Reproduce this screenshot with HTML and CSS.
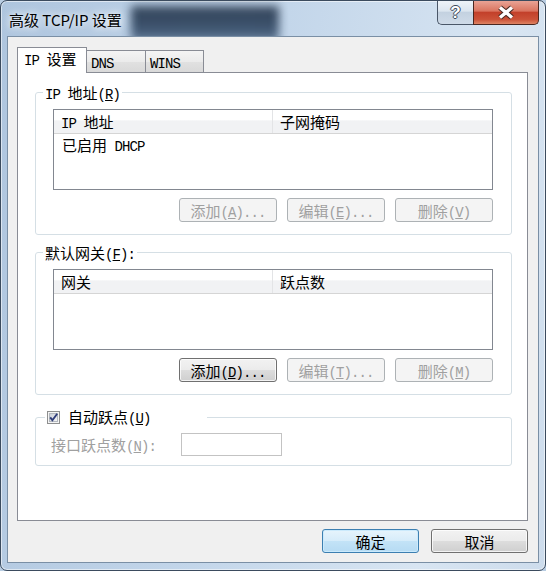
FILE: index.html
```html
<!DOCTYPE html>
<html lang="zh-CN">

<head>
    <meta charset="UTF-8">
    <title>高级 TCP/IP 设置</title>
    <link rel="stylesheet" href="styles.css">
</head>

<body>
    <div class="window">
        <div class="titlebar">
            <span class="title">高级 TCP/IP 设置</span>
            <div class="caption">
                <div class="cap-btn help">?</div>
                <div class="cap-btn close">
                    <svg width="20" height="15" viewBox="0 0 20 15">
                        <path d="M4 2.5 L16 12.5 M16 2.5 L4 12.5" stroke="#4b2a24" stroke-width="5.5" fill="none" />
                        <path d="M4 2.5 L16 12.5 M16 2.5 L4 12.5" stroke="#ffffff" stroke-width="3.4" fill="none" />
                    </svg>
                </div>
            </div>
        </div>

        <div class="client">
            <div class="tabs">
                <div class="tab active"><span class="en">IP </span>设置</div>
                <div class="tab dns"><span class="en">DNS</span></div>
                <div class="tab wins"><span class="en">WINS</span></div>
            </div>

            <div class="panel">
                <!-- IP 地址 -->
                <fieldset class="group">
                    <legend><span class="en">IP </span>地址<span class="en">(<u>R</u>)</span></legend>
                    <div class="group-body">
                        <div class="list">
                            <div class="list-head">
                                <div class="col c1"><span class="en">IP </span>地址</div>
                                <div class="col c2">子网掩码</div>
                            </div>
                            <div class="list-row">已启用<span class="en"> DHCP</span></div>
                        </div>
                        <div class="btn-row">
                            <button class="btn" disabled>添加<span class="en">(<u>A</u>)...</span></button>
                            <button class="btn" disabled>编辑<span class="en">(<u>E</u>)...</span></button>
                            <button class="btn" disabled>删除<span class="en">(<u>V</u>)</span></button>
                        </div>
                    </div>
                </fieldset>

                <!-- 默认网关 -->
                <fieldset class="group">
                    <legend>默认网关<span class="en">(<u>F</u>):</span></legend>
                    <div class="group-body">
                        <div class="list">
                            <div class="list-head">
                                <div class="col c1">网关</div>
                                <div class="col c2">跃点数</div>
                            </div>
                        </div>
                        <div class="btn-row">
                            <button class="btn">添加<span class="en">(<u>D</u>)...</span></button>
                            <button class="btn" disabled>编辑<span class="en">(<u>T</u>)...</span></button>
                            <button class="btn" disabled>删除<span class="en">(<u>M</u>)</span></button>
                        </div>
                    </div>
                </fieldset>

                <!-- 自动跃点 -->
                <fieldset class="group metric">
                    <legend>
                        <label class="check">
                            <svg class="box" width="13" height="13" viewBox="0 0 13 13">
                                <defs>
                                    <linearGradient id="cb" x1="0" y1="0" x2="1" y2="1">
                                        <stop offset="0" stop-color="#c9ced6" />
                                        <stop offset="1" stop-color="#f7f7f7" />
                                    </linearGradient>
                                </defs>
                                <rect x="0.5" y="0.5" width="12" height="12" fill="#f4f4f4" stroke="#8e8f8f" />
                                <rect x="2.5" y="2.5" width="8" height="8" fill="url(#cb)" stroke="#b3b8bf" />
                                <path d="M3.2 6.4 L5.4 9.2 L10.2 2.8" fill="none" stroke="#2f3d7a" stroke-width="1.9" />
                            </svg>
                            <span>自动跃点<span class="en">(<u>U</u>)</span></span>
                        </label>
                    </legend>
                    <div class="metric-row">
                        <span class="metric-label">接口跃点数<span class="en">(<u>N</u>):</span></span>
                        <input type="text" disabled>
                    </div>
                </fieldset>
            </div>

            <div class="footer">
                <button class="btn wide default">确定</button>
                <button class="btn wide">取消</button>
            </div>
        </div>
    </div>
</body>

</html>
```

FILE: styles.css
```css
* {
    box-sizing: border-box;
}

body {
    margin: 0;
    width: 546px;
    height: 571px;
    overflow: hidden;
    background-color: #b9cde2;
    font-family: "Noto Sans CJK SC", sans-serif;
    font-size: 15px;
    color: #000;
}

/* latin runs: half-width like SimSun */
.en {
    font-family: "Liberation Mono", monospace;
    font-size: 14px;
    line-height: 0;
    letter-spacing: -0.9px;
}

u {
    text-underline-offset: 1px;
}

.window {
    width: 546px;
    height: 571px;
    border: 1px solid #3b4b5e;
    border-radius: 7px;
    padding: 0 6px 7px;
    display: flex;
    flex-direction: column;
    overflow: hidden;
    background: linear-gradient(100deg, #aec5de 0%, #c3d6ea 45%, #d8e5f2 80%, #cddcec 100%);
    box-shadow: inset 0 0 0 1px rgba(255, 255, 255, 0.55);
}

.titlebar {
    height: 35px;
    display: flex;
    align-items: flex-start;
    position: relative;
}

/* blurred window behind the glass */
.titlebar::before {
    content: "";
    position: absolute;
    left: 124px;
    top: 5px;
    width: 148px;
    height: 36px;
    background: linear-gradient(#2a3a4f, #2f4560 55%, #5a7391);
    filter: blur(5px);
    opacity: 0.92;
}

.title {
    position: relative;
    margin: 9px 0 0 2px;
    line-height: 20px;
    font-size: 15px;
    text-shadow: 0 0 6px #fff, 0 0 12px rgba(255, 255, 255, 0.8);
}

.caption {
    position: relative;
    margin-left: auto;
    display: flex;
}

.cap-btn {
    height: 24px;
    border: 1px solid #4a5768;
    border-top: none;
}

.help {
    width: 36px;
    border-right: none;
    border-radius: 0 0 0 5px;
    background: linear-gradient(#eef3f8, #dbe5ef 45%, #c3d1e0 47%, #cfdbe8);
    color: #fff;
    font: bold 17px "Liberation Sans", sans-serif;
    line-height: 23px;
    text-align: center;
    text-shadow: -1px 0 #3d4b5c, 1px 0 #3d4b5c, 0 -1px #3d4b5c, 0 1px #3d4b5c;
}

.close {
    width: 66px;
    border-color: #4a2720;
    border-radius: 0 0 5px 0;
    background: linear-gradient(#e9a395, #d9735e 45%, #c23f29 47%, #cb5238 80%, #de8464);
    display: flex;
    align-items: center;
    justify-content: center;
}

.client {
    position: relative;
    height: 527px;
    border: 1px solid #7a8fa5;
    background-color: #f0f0f0;
    display: flex;
    flex-direction: column;
}

/* tabs */
.tabs {
    display: flex;
    align-items: flex-end;
    height: 25px;
    margin: 10px 0 0 9px;
}

.tab {
    height: 22px;
    margin-left: -1px;
    padding-left: 4px;
    border: 1px solid #898c95;
    border-bottom: none;
    line-height: 21px;
    background: linear-gradient(#f4f4f4, #ebebeb 50%, #e1e1e1 51%, #d9d9d9);
}

.tab.active {
    width: 70px;
    height: 26px;
    margin-left: 0;
    margin-bottom: -1px;
    padding-left: 6px;
    line-height: 21px;
    background: #fff;
    position: relative;
    z-index: 1;
}

.tab.dns {
    width: 60px;
}

.tab.wins {
    width: 59px;
}

.panel {
    width: 511px;
    height: 449px;
    margin-left: 9px;
    padding: 12px 15px 0 17px;
    border: 1px solid #898c95;
    background-color: #fff;
}

/* group boxes */
.group {
    margin: 0;
    padding: 0;
    min-width: 0;
    border: 1px solid #d5dfe5;
    border-radius: 3px;
}

.group + .group {
    margin-top: 10px;
}

.group legend {
    margin-left: 7px;
    padding: 0 2px;
    line-height: 15px;
}

.group-body {
    padding: 9px 18px 12px 17px;
}

.list {
    height: 81px;
    border: 1px solid #828790;
    background-color: #fff;
}

.list-head {
    display: flex;
    height: 24px;
    border-bottom: 1px solid #d5d5d5;
    background: linear-gradient(#fff 0%, #fff 45%, #f1f2f4 46%, #f1f2f4 100%);
}

.col {
    line-height: 23px;
    padding-left: 7px;
}

.col.c1 {
    width: 219px;
    border-right: 1px solid #e3e4e6;
}

.list-row {
    line-height: 22px;
    padding-left: 8px;
}

.btn-row {
    display: flex;
    justify-content: flex-end;
    gap: 10px;
    margin-top: 8px;
}

.btn {
    width: 98px;
    height: 24px;
    padding: 0;
    font: inherit;
    color: #000;
    border: 1px solid #707070;
    border-radius: 3px;
    background: linear-gradient(#f2f2f2, #ebebeb 49%, #dddddd 50%, #cfcfcf);
    box-shadow: inset 0 0 0 1px rgba(255, 255, 255, 0.75);
}

.btn:disabled {
    color: #a0a0a0;
    border-color: #adb2b5;
    background: #f4f4f4;
    box-shadow: none;
}

.btn.wide {
    width: 97px;
}

.btn.default {
    border-color: #3c7fb1;
    background: linear-gradient(#e6f4fc, #d6ecfa 49%, #c3e3f7 50%, #b6dbf3);
    box-shadow: inset 0 0 0 1px #cbeafc;
}

/* auto metric */
.group.metric {
    margin-top: 14px;
}

.group.metric legend {
    width: 162px;
    margin-left: 9px;
    line-height: 16px;
}

.check {
    display: flex;
    align-items: center;
    gap: 8px;
}

.box {
    display: block;
}

.metric-row {
    display: flex;
    align-items: center;
    padding: 8px 0 9px 15px;
}

.metric-label {
    width: 130px;
    color: #a0a0a0;
}

.metric-row input {
    width: 101px;
    height: 23px;
    margin: 0;
    border: 1px solid #c3c3c3;
    background-color: #fff;
}

.footer {
    display: flex;
    justify-content: flex-end;
    gap: 12px;
    margin-top: 8px;
    padding-right: 10px;
}
```
